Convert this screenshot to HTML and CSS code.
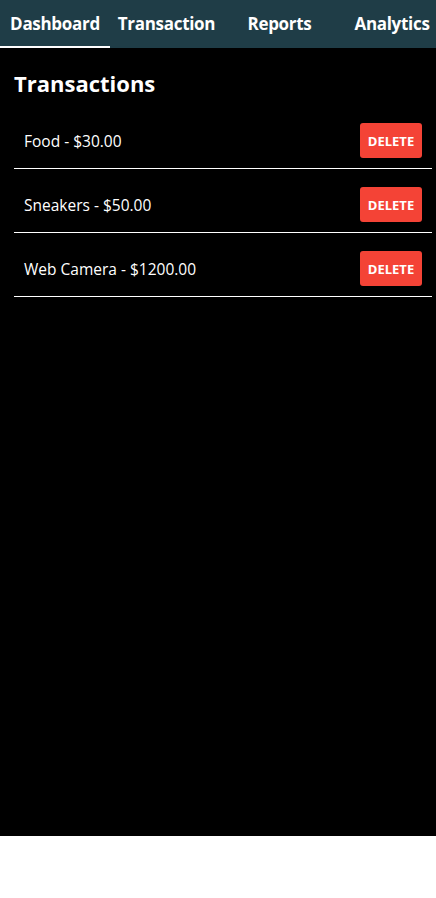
FILE: index.html
```html
<!DOCTYPE html>
<html>
<head>
<meta charset="utf-8">
<link rel="stylesheet" href="styles.css">
</head>
<body>
<div class="app">
  <nav class="tabs">
    <div class="tab active">Dashboard</div>
    <div class="tab">Transaction</div>
    <div class="tab">Reports</div>
    <div class="tab">Analytics</div>
  </nav>
  <main class="content">
    <h1 class="title">Transactions</h1>
    <ul class="list">
      <li class="row"><span class="label">Food - $30.00</span><button class="del">DELETE</button></li>
      <li class="row"><span class="label">Sneakers - $50.00</span><button class="del">DELETE</button></li>
      <li class="row"><span class="label">Web Camera - $1200.00</span><button class="del">DELETE</button></li>
    </ul>
  </main>
</div>
</body>
</html>
```
FILE: styles.css
```css
html, body {
  margin: 0;
  padding: 0;
  background: #ffffff;
}
body {
  font-family: "Open Sans", "Noto Sans", sans-serif;
  color: #fff;
}
.app {
  height: 836px;
  background: #000;
  display: flex;
  flex-direction: column;
}
.tabs {
  height: 48px;
  background: #1f3d47;
  display: grid;
  grid-template-columns: 110px 113px 113px 112px;
  overflow: hidden;
}
.tab {
  display: flex;
  align-items: center;
  justify-content: center;
  font-weight: 700;
  font-size: 17px;
  letter-spacing: -0.3px;
  white-space: nowrap;
  box-sizing: border-box;
  padding-bottom: 1px;
}
.tab.active {
  border-bottom: 2px solid #fff;
  padding-bottom: 0;
}
.content {
  padding: 0 4px 0 14px;
}
.title {
  margin: 0;
  height: 57px;
  box-sizing: border-box;
  padding-top: 20px;
  font-size: 22px;
  line-height: 30px;
  font-weight: 700;
  letter-spacing: 0;
}
.list {
  list-style: none;
  margin: 0;
  padding: 0;
}
.row {
  display: flex;
  align-items: center;
  justify-content: space-between;
  padding: 18px 10px 10px 10px;
  border-bottom: 1px solid #fff;
}
.label {
  font-size: 15.5px;
}
.del {
  width: 62px;
  height: 35px;
  background: #f44336;
  color: #fff;
  border: none;
  border-radius: 3px;
  font-family: "Open Sans", "Noto Sans", sans-serif;
  font-weight: 700;
  font-size: 13px;
  padding: 0;
}
```
